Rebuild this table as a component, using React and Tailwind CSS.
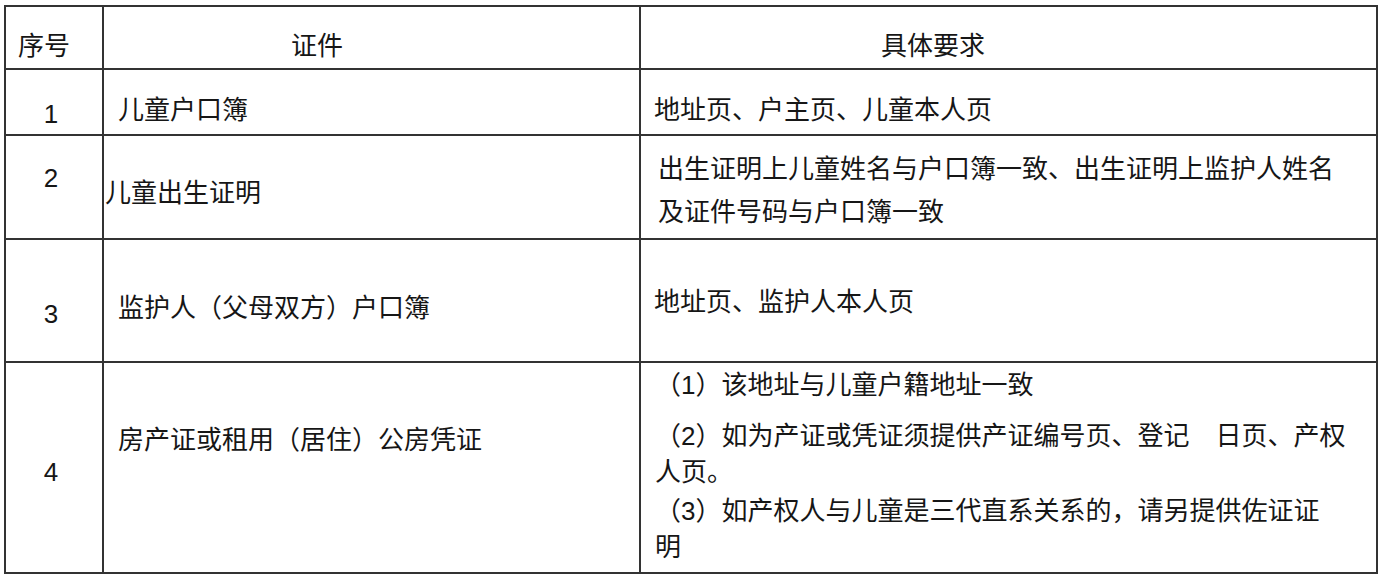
import React from 'react';

// table of documents required for child registration
const cell = 'border-2 border-[#333] align-top p-0';

export default function App() {
  return (
    <div className="w-[1381px] h-[578px] bg-white overflow-hidden font-['Liberation_Sans','Noto_Sans_CJK_SC',sans-serif] text-[26px] text-[#161616]">
      <table className="table-fixed border-collapse ml-[4px] mt-[5px]">
        <colgroup>
          <col className="w-[98px]" />
          <col className="w-[537px]" />
          <col className="w-[737px]" />
        </colgroup>
        <tbody className="leading-[30px]">
          <tr className="h-[63px]">
            <td className={`${cell} pl-[12px] pt-[24px]`}>序号</td>
            <td className={`${cell} pl-[187px] pt-[24px]`}>证件</td>
            <td className={`${cell} pl-[240px] pt-[24px]`}>具体要求</td>
          </tr>
          <tr className="h-[66px]">
            <td className={`${cell} text-center pr-[6px] pt-[29px]`}>1</td>
            <td className={`${cell} pl-[14px] pt-[25px]`}>儿童户口簿</td>
            <td className={`${cell} pl-[13px] pt-[25px]`}>地址页、户主页、儿童本人页</td>
          </tr>
          <tr className="h-[104px]">
            <td className={`${cell} text-center pr-[6px] pt-[27px]`}>2</td>
            <td className={`${cell} pl-[1px] pt-[42px]`}>儿童出生证明</td>
            <td className={`${cell} pl-[17px] pt-[12px] leading-[43px] whitespace-nowrap`}>
              <div>出生证明上儿童姓名与户口簿一致、出生证明上监护人姓名</div>
              <div>及证件号码与户口簿一致</div>
            </td>
          </tr>
          <tr className="h-[123px]">
            <td className={`${cell} text-center pr-[6px] pt-[59px]`}>3</td>
            <td className={`${cell} pl-[14px] pt-[53px]`}>监护人（父母双方）户口簿</td>
            <td className={`${cell} pl-[13px] pt-[47px]`}>地址页、监护人本人页</td>
          </tr>
          <tr className="h-[211px]">
            <td className={`${cell} text-center pr-[6px] pt-[94px]`}>4</td>
            <td className={`${cell} pl-[14px] pt-[62px]`}>房产证或租用（居住）公房凭证</td>
            <td className={`${cell} pl-[14px] pt-[4px] leading-[36px] whitespace-nowrap`}>
              <p>（1）该地址与儿童户籍地址一致</p>
              <p className="mt-[15px]">（2）如为产证或凭证须提供产证编号页、登记　日页、产权</p>
              <p>人页。</p>
              <p className="mt-[3px]">（3）如产权人与儿童是三代直系关系的，请另提供佐证证</p>
              <p>明</p>
            </td>
          </tr>
        </tbody>
      </table>
    </div>
  );
}
